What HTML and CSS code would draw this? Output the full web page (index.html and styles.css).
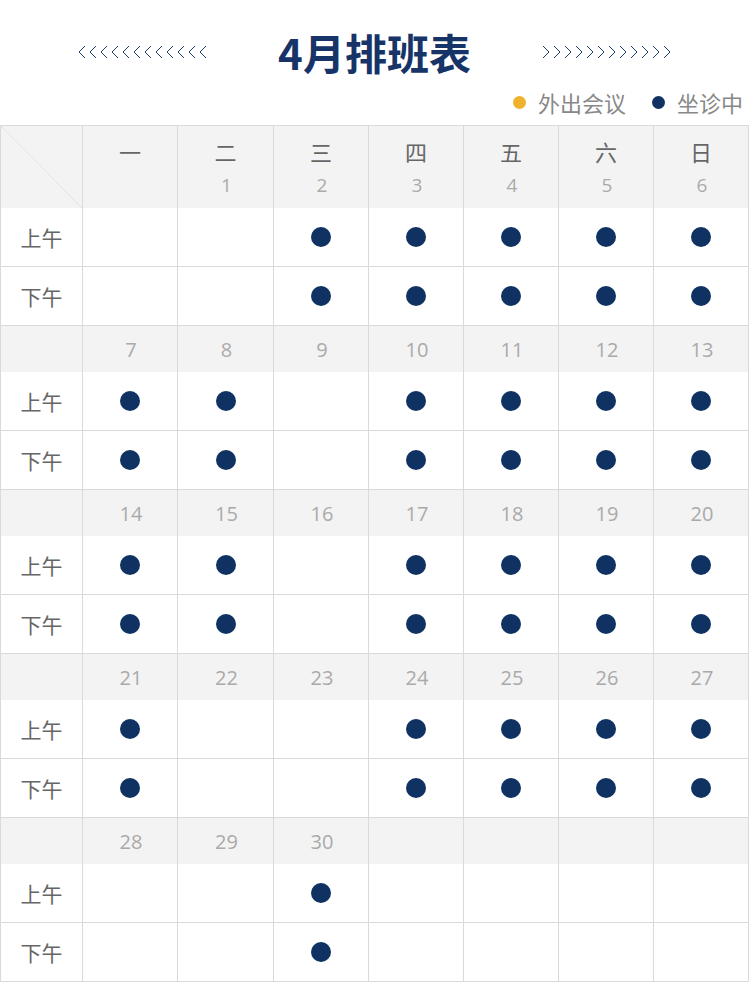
FILE: index.html
```html
<!DOCTYPE html>
<html lang="zh">
<head>
<meta charset="utf-8">
<title>4月排班表</title>
<link rel="stylesheet" href="styles.css">
</head>
<body>
<header class="top">
  <svg class="chev" width="128" height="14" viewBox="0 0 128 14" aria-hidden="true">
    <path d="M7 1 L1 7 L7 13 M18 1 L12 7 L18 13 M29 1 L23 7 L29 13 M40 1 L34 7 L40 13 M51 1 L45 7 L51 13 M62 1 L56 7 L62 13 M73 1 L67 7 L73 13 M84 1 L78 7 L84 13 M95 1 L89 7 L95 13 M106 1 L100 7 L106 13 M117 1 L111 7 L117 13 M128 1 L122 7 L128 13"/>
  </svg>
  <h1 class="title">4月排班表</h1>
  <svg class="chev" width="128" height="14" viewBox="0 0 128 14" aria-hidden="true">
    <path d="M0 1 L6 7 L0 13 M11 1 L17 7 L11 13 M22 1 L28 7 L22 13 M33 1 L39 7 L33 13 M44 1 L50 7 L44 13 M55 1 L61 7 L55 13 M66 1 L72 7 L66 13 M77 1 L83 7 L77 13 M88 1 L94 7 L88 13 M99 1 L105 7 L99 13 M110 1 L116 7 L110 13 M121 1 L127 7 L121 13"/>
  </svg>
</header>
<div class="legend">
  <span class="item"><i class="ldot yellow"></i>外出会议</span>
  <span class="item"><i class="ldot navy"></i>坐诊中</span>
</div>
<div class="grid">
  <div class="cell head corner"></div>
  <div class="cell head"><span class="wd">一</span></div>
  <div class="cell head"><span class="wd">二</span><span class="dn">1</span></div>
  <div class="cell head"><span class="wd">三</span><span class="dn">2</span></div>
  <div class="cell head"><span class="wd">四</span><span class="dn">3</span></div>
  <div class="cell head"><span class="wd">五</span><span class="dn">4</span></div>
  <div class="cell head"><span class="wd">六</span><span class="dn">5</span></div>
  <div class="cell head"><span class="wd">日</span><span class="dn">6</span></div>

  <div class="cell label">上午</div>
  <div class="cell"></div><div class="cell"></div>
  <div class="cell"><i class="dot"></i></div><div class="cell"><i class="dot"></i></div><div class="cell"><i class="dot"></i></div><div class="cell"><i class="dot"></i></div><div class="cell"><i class="dot"></i></div>
  <div class="cell label">下午</div>
  <div class="cell"></div><div class="cell"></div>
  <div class="cell"><i class="dot"></i></div><div class="cell"><i class="dot"></i></div><div class="cell"><i class="dot"></i></div><div class="cell"><i class="dot"></i></div><div class="cell"><i class="dot"></i></div>

  <div class="cell wk"></div><div class="cell wk">7</div><div class="cell wk">8</div><div class="cell wk">9</div><div class="cell wk">10</div><div class="cell wk">11</div><div class="cell wk">12</div><div class="cell wk">13</div>
  <div class="cell label">上午</div>
  <div class="cell"><i class="dot"></i></div><div class="cell"><i class="dot"></i></div><div class="cell"></div><div class="cell"><i class="dot"></i></div><div class="cell"><i class="dot"></i></div><div class="cell"><i class="dot"></i></div><div class="cell"><i class="dot"></i></div>
  <div class="cell label">下午</div>
  <div class="cell"><i class="dot"></i></div><div class="cell"><i class="dot"></i></div><div class="cell"></div><div class="cell"><i class="dot"></i></div><div class="cell"><i class="dot"></i></div><div class="cell"><i class="dot"></i></div><div class="cell"><i class="dot"></i></div>

  <div class="cell wk"></div><div class="cell wk">14</div><div class="cell wk">15</div><div class="cell wk">16</div><div class="cell wk">17</div><div class="cell wk">18</div><div class="cell wk">19</div><div class="cell wk">20</div>
  <div class="cell label">上午</div>
  <div class="cell"><i class="dot"></i></div><div class="cell"><i class="dot"></i></div><div class="cell"></div><div class="cell"><i class="dot"></i></div><div class="cell"><i class="dot"></i></div><div class="cell"><i class="dot"></i></div><div class="cell"><i class="dot"></i></div>
  <div class="cell label">下午</div>
  <div class="cell"><i class="dot"></i></div><div class="cell"><i class="dot"></i></div><div class="cell"></div><div class="cell"><i class="dot"></i></div><div class="cell"><i class="dot"></i></div><div class="cell"><i class="dot"></i></div><div class="cell"><i class="dot"></i></div>

  <div class="cell wk"></div><div class="cell wk">21</div><div class="cell wk">22</div><div class="cell wk">23</div><div class="cell wk">24</div><div class="cell wk">25</div><div class="cell wk">26</div><div class="cell wk">27</div>
  <div class="cell label">上午</div>
  <div class="cell"><i class="dot"></i></div><div class="cell"></div><div class="cell"></div><div class="cell"><i class="dot"></i></div><div class="cell"><i class="dot"></i></div><div class="cell"><i class="dot"></i></div><div class="cell"><i class="dot"></i></div>
  <div class="cell label">下午</div>
  <div class="cell"><i class="dot"></i></div><div class="cell"></div><div class="cell"></div><div class="cell"><i class="dot"></i></div><div class="cell"><i class="dot"></i></div><div class="cell"><i class="dot"></i></div><div class="cell"><i class="dot"></i></div>

  <div class="cell wk"></div><div class="cell wk">28</div><div class="cell wk">29</div><div class="cell wk">30</div><div class="cell wk"></div><div class="cell wk"></div><div class="cell wk"></div><div class="cell wk"></div>
  <div class="cell label">上午</div>
  <div class="cell"></div><div class="cell"></div><div class="cell"><i class="dot"></i></div><div class="cell"></div><div class="cell"></div><div class="cell"></div><div class="cell"></div>
  <div class="cell label">下午</div>
  <div class="cell"></div><div class="cell"></div><div class="cell"><i class="dot"></i></div><div class="cell"></div><div class="cell"></div><div class="cell"></div><div class="cell"></div>
</div>
</body>
</html>
```

FILE: styles.css
```css
* { box-sizing: border-box; }
html, body { margin: 0; padding: 0; background: #fff; }
body {
  width: 749px;
  font-family: "Noto Sans CJK SC", "Noto Sans", sans-serif;
  color: #666;
}
.top {
  height: 88px;
  padding-top: 16px;
  display: flex;
  align-items: center;
  justify-content: center;
  gap: 72px;
}
.chev { overflow: visible; }
.chev path {
  fill: none;
  stroke: #1b3d6e;
  stroke-width: 1;
}
.title {
  margin: 0;
  font-size: 42px;
  font-weight: 700;
  line-height: 1;
  color: #163468;
}
.legend {
  height: 28px;
  margin-bottom: 9px;
  display: flex;
  justify-content: flex-end;
  align-items: center;
  gap: 26px;
  padding-right: 6px;
  font-size: 22px;
  color: #888;
}
.item { display: flex; align-items: center; }
.ldot {
  display: inline-block;
  width: 13px;
  height: 13px;
  border-radius: 50%;
  margin-right: 12px;
}
.yellow { background: #efb22c; }
.navy { background: #0f3262; }
.grid {
  display: grid;
  grid-template-columns: 82px 95px 96px repeat(5, 95px);
  grid-template-rows: 82px 59px 59px repeat(4, 46px 59px 59px);
  border-left: 1px solid #dadada;
  border-top: 1px solid #dadada;
  width: 749px;
}
.cell {
  border-right: 1px solid #dadada;
  border-bottom: 1px solid #dadada;
  display: flex;
  align-items: center;
  justify-content: center;
}
.head {
  background: #f3f3f3;
  border-bottom: none;
  flex-direction: column;
  justify-content: flex-start;
  padding-top: 10px;
}
.corner {
  background: #f3f3f3 linear-gradient(to top right, transparent calc(50% - 0.7px), #e2e2e2 50%, transparent calc(50% + 0.7px));
}
.wd {
  font-size: 22px;
  line-height: 30px;
  color: #666;
}
.dn {
  margin-top: 7px;
  padding-left: 2px;
  font-family: "Open Sans", "Noto Sans", sans-serif;
  font-size: 19px;
  line-height: 24px;
  color: #aaa;
}
.wk {
  background: #f3f3f3;
  border-bottom: none;
  padding-left: 2px;
  font-family: "Open Sans", "Noto Sans", sans-serif;
  font-size: 20px;
  color: #aaa;
}
.label {
  font-size: 21px;
  color: #666;
}
.dot {
  display: block;
  width: 20px;
  height: 20px;
  border-radius: 50%;
  background: #0f3262;
}
```
